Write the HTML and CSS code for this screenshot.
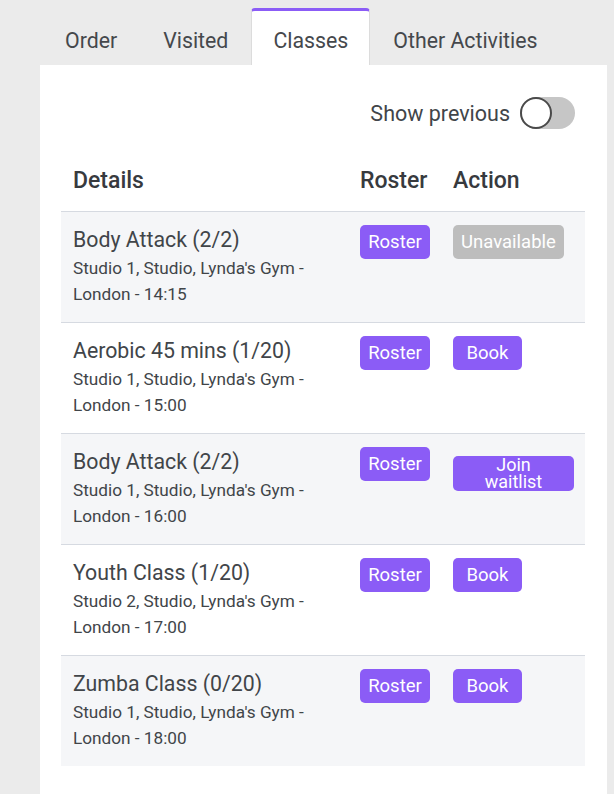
FILE: index.html
```html
<!DOCTYPE html>
<html>
<head>
<meta charset="utf-8">
<link rel="stylesheet" href="styles.css">
</head>
<body>
<div class="tabs">
  <div class="tab">Order</div>
  <div class="tab">Visited</div>
  <div class="tab active">Classes</div>
  <div class="tab">Other Activities</div>
</div>
<div class="panel">
  <div class="toolbar">
    <span class="toggle-label">Show previous</span>
    <span class="toggle"><span class="knob"></span></span>
  </div>
  <table class="classes">
    <colgroup><col class="col-details"><col class="col-roster"><col class="col-action"></colgroup>
    <thead>
      <tr><th>Details</th><th>Roster</th><th>Action</th></tr>
    </thead>
    <tbody>
      <tr>
        <td><div class="title">Body Attack (2/2)</div><div class="sub">Studio 1, Studio, Lynda's Gym - London - 14:15</div></td>
        <td><span class="btn roster">Roster</span></td>
        <td><span class="btn grey">Unavailable</span></td>
      </tr>
      <tr>
        <td><div class="title">Aerobic 45 mins (1/20)</div><div class="sub">Studio 1, Studio, Lynda's Gym - London - 15:00</div></td>
        <td><span class="btn roster">Roster</span></td>
        <td><span class="btn book">Book</span></td>
      </tr>
      <tr>
        <td><div class="title">Body Attack (2/2)</div><div class="sub">Studio 1, Studio, Lynda's Gym - London - 16:00</div></td>
        <td><span class="btn roster">Roster</span></td>
        <td><span class="btn wait">Join<br>waitlist</span></td>
      </tr>
      <tr>
        <td><div class="title">Youth Class (1/20)</div><div class="sub">Studio 2, Studio, Lynda's Gym - London - 17:00</div></td>
        <td><span class="btn roster">Roster</span></td>
        <td><span class="btn book">Book</span></td>
      </tr>
      <tr>
        <td><div class="title">Zumba Class (0/20)</div><div class="sub">Studio 1, Studio, Lynda's Gym - London - 18:00</div></td>
        <td><span class="btn roster">Roster</span></td>
        <td><span class="btn book">Book</span></td>
      </tr>
    </tbody>
  </table>
</div>
</body>
</html>
```
FILE: styles.css
```css
html, body {
  margin: 0;
  padding: 0;
  background: #ebebeb;
  font-family: Roboto, "Liberation Sans", sans-serif;
  color: #414549;
}
.tabs {
  display: flex;
  padding: 8px 0 0 42px;
  height: 57px;
}
.tab {
  padding: 0 23px;
  font-size: 21.3px;
  line-height: 65px;
  height: 57px;
  box-sizing: border-box;
  color: #45484c;
}
.tab.active {
  background: #fff;
  border-top: 3px solid #8b5cf6;
  border-left: 1px solid #dcdcdc;
  border-right: 1px solid #dcdcdc;
  border-radius: 4px 4px 0 0;
  line-height: 59px;
  padding: 0 21px;
}
.panel {
  margin-left: 40px;
  width: 567px;
  min-height: 740px;
  background: #fff;
  padding: 0 22px 0 21px;
  box-sizing: border-box;
}
.toolbar {
  display: flex;
  justify-content: flex-end;
  align-items: center;
  gap: 10px;
  padding: 32px 10px 0 0;
  height: 64px;
  box-sizing: border-box;
}
.toggle-label {
  font-size: 21.5px;
}
.toggle {
  width: 55px;
  height: 32px;
  border-radius: 16px;
  background: #c6c6c6;
  position: relative;
  display: inline-block;
}
.knob {
  position: absolute;
  left: 0;
  top: 0;
  width: 32px;
  height: 32px;
  box-sizing: border-box;
  border-radius: 50%;
  background: #fff;
  border: 2px solid #4a4a4a;
}
.classes {
  width: 524px;
  border-collapse: collapse;
  table-layout: fixed;
  margin-top: 21px;
}
.col-details { width: 287px; }
.col-roster { width: 93px; }
.col-action { width: 144px; }
.classes th {
  text-align: left;
  font-size: 23px;
  font-weight: 500;
  color: #373a3e;
  height: 61px;
  padding: 0 12px;
  vertical-align: middle;
}
.classes td {
  border-top: 1px solid #d6dae1;
  vertical-align: top;
  padding: 13px 12px 15px 12px;
}
.classes tbody tr:nth-child(odd) td {
  background: #f5f6f8;
}
.title {
  font-size: 21.3px;
  line-height: 30px;
}
.sub {
  font-size: 17.2px;
  line-height: 26px;
  width: 260px;
}
.btn {
  display: inline-block;
  background: #8b5cf6;
  color: #fff;
  font-size: 18.5px;
  height: 34px;
  line-height: 34px;
  border-radius: 5px;
  padding: 0 6px;
  box-sizing: border-box;
  text-align: center;
  white-space: nowrap;
}
.btn.roster { width: 70px; }
.btn.book { width: 69px; }
.btn.grey { background: #bdbdbd; width: 111px; }
.btn.wait {
  width: 121px;
  height: 35px;
  font-size: 18px;
  line-height: 17px;
  padding-top: 0;
  margin-top: 9px;
}
```
